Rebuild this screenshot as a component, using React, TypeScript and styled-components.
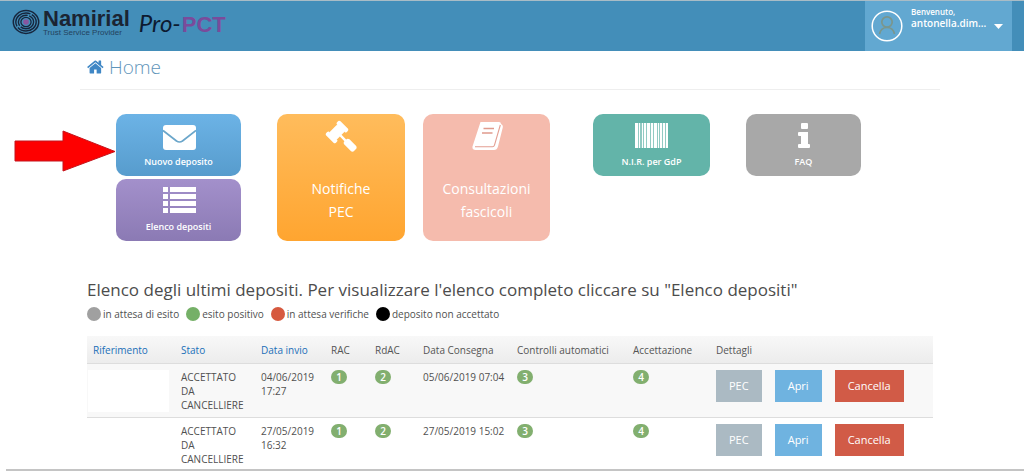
import React from "react";
import styled, { createGlobalStyle } from "styled-components";

const GlobalStyle = createGlobalStyle`
  *, *::before, *::after { box-sizing: border-box; }
  body {
    margin: 0;
    background: #fff;
    color: #505050;
    font-family: "Open Sans", "Noto Sans", sans-serif;
    font-size: 10px;
    line-height: 14px;
  }
`;

const Header = styled.header`
  display: flex;
  justify-content: space-between;
  height: 51px;
  padding: 0 12px;
  background: #438eb9;
  border-top: 1px solid #a9bcc6;
`;

const Brand = styled.a`
  display: flex;
  align-items: flex-start;
  padding-top: 8px;
  color: #1c1f3a;
  text-decoration: none;
  font-family: "Liberation Sans", Arial, sans-serif;
`;

const LogoMark = styled.svg`
  width: 28px;
  height: 26px;
  margin-right: 3px;
`;

const BrandText = styled.span`
  display: flex;
  flex-direction: column;
`;

const BrandName = styled.span`
  font-size: 22px;
  line-height: 20px;
  font-weight: 700;
  color: #1b2433;
`;

const BrandTagline = styled.span`
  font-size: 8px;
  line-height: 8px;
  color: #24435e;
`;

const Product = styled.span`
  display: flex;
  align-items: baseline;
  gap: 1px;
  margin-left: 9px;
  line-height: 28px;
`;

const ProductPrefix = styled.span`
  font-family: Lato, sans-serif;
  font-style: italic;
  font-size: 24px;
  color: #0d1a30;
`;

const ProductName = styled.span`
  font-size: 22px;
  font-weight: 700;
  color: #7a4b9b;
`;

const UserMenu = styled.button`
  display: flex;
  align-items: flex-start;
  width: 147px;
  padding: 5px 9px 0 6px;
  border: 0;
  background: #62a8d1;
  color: #fff;
  font-family: inherit;
  text-align: left;
`;

const Avatar = styled.svg`
  width: 32px;
  height: 32px;
  margin-top: 4px;
`;

const UserText = styled.span`
  display: flex;
  flex: 1;
  flex-direction: column;
  margin-left: 8px;
  font-size: 10px;
  line-height: 11px;
  font-weight: 600;
`;

const Greeting = styled.span`
  font-size: 8px;
  line-height: 12px;
`;

const Caret = styled.svg`
  width: 9px;
  height: 5px;
  margin-top: 18px;
`;

const Main = styled.main`
  padding: 0 84px 0 80px;
`;

const PageHeader = styled.div`
  display: flex;
  align-items: center;
  height: 39px;
  padding: 0 7px 6px;
  border-bottom: 1px solid #eee;
`;

const PageTitle = styled.h1`
  display: flex;
  align-items: center;
  gap: 4px;
  margin: 0;
  color: #5f95ba;
  font-size: 19px;
  line-height: 26px;
  font-weight: 300;
`;

const Glyph = styled.svg<{ $size: number; $color?: string }>`
  display: block;
  flex: none;
  width: ${(p) => p.$size}px;
  height: ${(p) => p.$size}px;
  fill: ${(p) => p.$color ?? "currentColor"};
`;

const Tiles = styled.nav`
  display: flex;
  align-items: flex-start;
  gap: 36px;
  padding: 24px 0 0 36px;
`;

const TileStack = styled.div`
  position: relative;
  display: flex;
  flex-direction: column;
  gap: 3px;
`;

const TilePair = styled.div`
  display: flex;
  gap: 18px;
  margin-right: 7px;
`;

const Pointer = styled.svg`
  position: absolute;
  top: 16px;
  right: 100%;
  width: 102px;
  height: 42px;
`;

const Tile = styled.button<{ $width: number; $from: string; $to: string; $large?: boolean }>`
  display: flex;
  flex-direction: column;
  align-items: center;
  width: ${(p) => p.$width}px;
  height: ${(p) => (p.$large ? 127 : 62)}px;
  padding: ${(p) => (p.$large ? 6 : 7)}px 0 0;
  border: 0;
  border-radius: 10px;
  background: linear-gradient(${(p) => p.$from}, ${(p) => p.$to});
  color: #fff;
  font-family: inherit;
  font-size: ${(p) => (p.$large ? 14 : 9)}px;
  line-height: ${(p) => (p.$large ? 23 : 14)}px;
  font-weight: ${(p) => (p.$large ? 400 : 600)};
  gap: ${(p) => (p.$large ? 25 : 0)}px;
`;

const SectionTitle = styled.h2`
  margin: 0;
  font-size: 17px;
  line-height: 24px;
  font-weight: 400;
  color: #4c4c4c;
`;

const Deposits = styled.section`
  padding: 37px 7px 0;
`;

const Legend = styled.ul`
  display: flex;
  gap: 7px;
  margin: 5px 0 15px;
  padding: 0;
  list-style: none;
`;

const LegendItem = styled.li`
  display: flex;
  align-items: center;
  gap: 2px;
`;

const Dot = styled.span<{ $color: string }>`
  width: 14px;
  height: 14px;
  border-radius: 7px;
  background: ${(p) => p.$color};
`;

const Table = styled.table`
  width: 100%;
  table-layout: fixed;
  border-collapse: separate;
  border-spacing: 0;
`;

const Col = styled.col<{ $width?: number }>`
  width: ${(p) => (p.$width ? `${p.$width}px` : "auto")};
`;

const HeadCell = styled.th`
  height: 28px;
  padding: 0 6px;
  border-bottom: 1px solid #ddd;
  background: linear-gradient(#f8f8f8, #ececec);
  text-align: left;
  font-weight: 400;
  color: #555;
  white-space: nowrap;
`;

const SortLink = styled.a`
  color: #1a6fb8;
  text-decoration: none;
`;

const Cell = styled.td`
  padding: 6px 6px 5px;
  vertical-align: top;
`;

const ReferenceCell = styled(Cell)`
  padding-left: 1px;
`;

const Row = styled.tr<{ $shaded: boolean }>`
  background: ${(p) => (p.$shaded ? "#f8f8f8" : "#fff")};

  &:not(:last-child) > td { border-bottom: 1px solid #ddd; }
  &:last-child > td { padding-bottom: 3px; }
`;

const HiddenReference = styled.div`
  height: 42px;
  background: #fff;
`;

const Badge = styled.span`
  display: block;
  width: 16px;
  height: 14px;
  border-radius: 7px;
  background: #82af6f;
  color: #fff;
  text-align: center;
  font-weight: 600;
`;

const Actions = styled.div`
  display: flex;
  gap: 13px;
`;

const ActionButton = styled.button<{ $color: string }>`
  height: 32px;
  padding: 0 13px;
  border: 0;
  background: ${(p) => p.$color};
  color: #fff;
  font-family: inherit;
  font-size: 11px;
  line-height: 16px;
`;

const BottomRule = styled.footer`
  height: 2px;
  margin-left: 6px;
  background: #c4c4c4;
`;

const HOME =
  "M1408 992v480q0 26-19 45t-45 19h-384v-384h-256v384h-384q-26 0-45-19t-19-45v-480q0-1 .5-3t.5-3l575-474 575 474q1 2 1 6zm223-69l-62 74q-8 9-21 11h-3q-13 0-21-7l-692-577-692 577q-12 8-24 7-13-2-21-11l-62-74q-8-10-7-23.5t11-21.5l719-599q32-26 76-26t76 26l244 204v-195q0-14 9-23t23-9h192q14 0 23 9t9 23v408l219 182q10 8 11 21.5t-7 23.5z";
const GAVEL =
  "M1771 1536q0 53-37 90l-107 108q-39 37-91 37-53 0-90-37l-363-364q-38-36-38-90 0-53 43-96l-256-256-126 126q-14 14-34 14t-34-14q2 2 12.5 12t12.5 13 10 11.5 10 13.5 6 13.5 5.5 16.5 1.5 18q0 38-28 68-3 3-16.5 18t-19 20.5-18.5 16.5-22 15.5-22 9-26 4.5q-40 0-68-28l-408-408q-28-28-28-68 0-13 4.5-26t9-22 15.5-22 16.5-18.5 20.5-19 18-16.5q30-28 68-28 10 0 18 1.5t16.5 5.5 13.5 6 13.5 10 11.5 10 13 12.5 12 12.5q-14-14-14-34t14-34l348-348q14-14 34-14t34 14q-2-2-12.5-12t-12.5-13-10-11.5-10-13.5-6-13.5-5.5-16.5-1.5-18q0-38 28-68 3-3 16.5-18t19-20.5 18.5-16.5 22-15.5 22-9 26-4.5q40 0 68 28l408 408q28 28 28 68 0 13-4.5 26t-9 22-15.5 22-16.5 18.5-20.5 19-18 16.5q-30 28-68 28-10 0-18-1.5t-16.5-5.5-13.5-6-13.5-10-11.5-10-13-12.5-12-12.5q14 14 14 34t-14 34l-126 126 256 256q43-43 96-43 52 0 91 37l363 363q37 39 37 91z";

function HomeIcon() {
  return (
    <Glyph $size={18} $color="#3f87c5" viewBox="0 0 1792 1792" aria-hidden="true">
      <path d={HOME} />
    </Glyph>
  );
}

function GavelIcon() {
  return (
    <Glyph $size={32} viewBox="0 0 1792 1792" aria-hidden="true">
      <path d={GAVEL} />
    </Glyph>
  );
}

function BookIcon() {
  return (
    <Glyph $size={32} viewBox="0 0 32 32" aria-hidden="true">
      <path d="M9.500 2H28q2 0 2 2l1 .8q1.200 1 .7 3L27 26.500Q26 30 23 30H4.500Q1 30 1.500 26.500z" />
      <path d="M4 26.800h17.500q1.500 0 2-1.700L29.300 5" fill="none" stroke="#e39f92" strokeWidth="1.100" />
      <path d="M12.500 8.500H23M11 13h10.500" fill="none" stroke="#df9a8d" strokeWidth="1.300" />
    </Glyph>
  );
}

function EnvelopeIcon() {
  return (
    <Glyph $size={34} viewBox="0 0 34 34" aria-hidden="true">
      <rect x="1" y="4" width="33" height="25" rx="3" />
      <path d="M1 9.500l13.500 10.500q3 2 6 0L34 9.500" fill="none" stroke="#6ba6ca" strokeWidth="1.700" />
    </Glyph>
  );
}

function ListIcon() {
  return (
    <Glyph $size={34} viewBox="0 0 34 34" aria-hidden="true">
      {[1, 8, 15, 22].map((y) => (
        <g key={y}>
          <rect x="1" y={y} width="5" height="5" />
          <rect x="8" y={y} width="26" height="5" />
        </g>
      ))}
    </Glyph>
  );
}

const BARS = [
  [0, 3], [4, 1], [7, 1], [9, 2], [12, 3], [16, 2], [19, 3], [23, 1], [25, 2], [28, 2], [31, 2],
];

function BarcodeIcon() {
  return (
    <Glyph $size={34} viewBox="0 0 34 34" aria-hidden="true">
      <rect x="0" y="2" width="33" height="25" opacity="0.3" />
      {BARS.map(([x, width]) => (
        <rect key={x} x={x} y="2" width={width} height="25" />
      ))}
    </Glyph>
  );
}

function InfoIcon() {
  return (
    <Glyph $size={34} viewBox="0 0 34 34" aria-hidden="true">
      <rect x="14" y="2" width="7" height="6" rx="1" />
      <path d="M12 11h9v12h1q1 0 1 1v2q0 1-1 1H12q-1 0-1-1v-2q0-1 1-1h2v-8h-2q-1 0-1-1v-2q0-1 1-1z" />
    </Glyph>
  );
}

const legend = [
  { label: "in attesa di esito", color: "#a0a0a0" },
  { label: "esito positivo", color: "#75b067" },
  { label: "in attesa verifiche", color: "#d6593f" },
  { label: "deposito non accettato", color: "#000" },
];

const deposits = [
  { sent: "04/06/2019 17:27", delivered: "05/06/2019 07:04" },
  { sent: "27/05/2019 16:32", delivered: "27/05/2019 15:02" },
];

const columns = [88, 80, 70, 44, 48, 94, 116, 83];

export default function App() {
  return (
    <>
      <GlobalStyle />
      <Header>
        <Brand href="#">
          <LogoMark viewBox="0 0 28 26" fill="none" stroke="#17263d" aria-hidden="true">
            <ellipse cx="14" cy="13" rx="12.700" ry="11.400" strokeWidth="1.500" />
            <ellipse cx="14" cy="13" rx="10.200" ry="9" strokeWidth="1.400" strokeDasharray="24 1.500" />
            <ellipse cx="14" cy="13" rx="7.600" ry="6.800" strokeWidth="1.400" strokeDasharray="17 1.500" />
            <ellipse cx="14" cy="13" rx="5.100" ry="4.600" strokeWidth="1.300" />
            <circle cx="14" cy="13" r="2.800" fill="#87569f" stroke="none" />
          </LogoMark>
          <BrandText>
            <BrandName>Namirial</BrandName>
            <BrandTagline>Trust Service Provider</BrandTagline>
          </BrandText>
          <Product>
            <ProductPrefix>Pro-</ProductPrefix>
            <ProductName>PCT</ProductName>
          </Product>
        </Brand>
        <UserMenu type="button">
          <Avatar viewBox="0 0 32 32" fill="none" aria-hidden="true">
            <circle cx="16" cy="16" r="14.800" stroke="#fff" strokeWidth="1.500" />
            <circle cx="16" cy="12" r="5.200" stroke="#7b968c" strokeWidth="1.700" />
            <path d="M8.500 24c1-4.500 4-6.500 7.500-6.500s6.500 2 7.500 6.500" stroke="#7b968c" strokeWidth="1.700" />
          </Avatar>
          <UserText>
            <Greeting>Benvenuto,</Greeting>
            antonella.dim...
          </UserText>
          <Caret viewBox="0 0 9 5" aria-hidden="true">
            <path d="M0 0h9L4.500 5z" fill="#fff" />
          </Caret>
        </UserMenu>
      </Header>
      <Main>
        <PageHeader>
          <PageTitle>
            <HomeIcon />
            Home
          </PageTitle>
        </PageHeader>
        <Tiles>
          <TileStack>
            <Tile type="button" $width={125} $from="#6cb3e6" $to="#579ccd">
              <EnvelopeIcon />
              Nuovo deposito
            </Tile>
            <Tile type="button" $width={125} $from="#a390cb" $to="#8b7ab4">
              <ListIcon />
              Elenco depositi
            </Tile>
            <Pointer viewBox="0 0 102 42" aria-hidden="true">
              <path d="M1 11h48V1l52 20.500L49 41V31H1z" fill="#fe0000" stroke="#c4141c" />
            </Pointer>
          </TileStack>
          <TilePair>
            <Tile type="button" $large $width={128} $from="#ffbc5c" $to="#ffa530">
              <GavelIcon />
              <span>
                Notifiche
                <br />
                PEC
              </span>
            </Tile>
            <Tile type="button" $large $width={127} $from="#f5bbad" $to="#f5bbad">
              <BookIcon />
              <span>
                Consultazioni
                <br />
                fascicoli
              </span>
            </Tile>
          </TilePair>
          <Tile type="button" $width={117} $from="#63b4a9" $to="#63b4a9">
            <BarcodeIcon />
            N.I.R. per GdP
          </Tile>
          <Tile type="button" $width={115} $from="#a8a8a8" $to="#a8a8a8">
            <InfoIcon />
            FAQ
          </Tile>
        </Tiles>
        <Deposits>
          <SectionTitle>
            Elenco degli ultimi depositi. Per visualizzare l'elenco completo cliccare su "Elenco depositi"
          </SectionTitle>
          <Legend>
            {legend.map((item) => (
              <LegendItem key={item.label}>
                <Dot $color={item.color} />
                {item.label}
              </LegendItem>
            ))}
          </Legend>
          <Table>
            <colgroup>
              {columns.map((width, i) => (
                <Col key={i} $width={width} />
              ))}
              <Col />
            </colgroup>
            <thead>
              <tr>
                {["Riferimento", "Stato", "Data invio"].map((label) => (
                  <HeadCell key={label} scope="col">
                    <SortLink href="#">{label}</SortLink>
                  </HeadCell>
                ))}
                {["RAC", "RdAC", "Data Consegna", "Controlli automatici", "Accettazione", "Dettagli"].map((label) => (
                  <HeadCell key={label} scope="col">
                    {label}
                  </HeadCell>
                ))}
              </tr>
            </thead>
            <tbody>
              {deposits.map((deposit, i) => (
                <Row key={deposit.sent} $shaded={i % 2 === 0}>
                  <ReferenceCell>
                    <HiddenReference />
                  </ReferenceCell>
                  <Cell>ACCETTATO DA CANCELLIERE</Cell>
                  <Cell>{deposit.sent}</Cell>
                  <Cell><Badge>1</Badge></Cell>
                  <Cell><Badge>2</Badge></Cell>
                  <Cell>{deposit.delivered}</Cell>
                  <Cell><Badge>3</Badge></Cell>
                  <Cell><Badge>4</Badge></Cell>
                  <Cell>
                    <Actions>
                      <ActionButton type="button" $color="#abbac3">PEC</ActionButton>
                      <ActionButton type="button" $color="#6fb3e0">Apri</ActionButton>
                      <ActionButton type="button" $color="#d15b47">Cancella</ActionButton>
                    </Actions>
                  </Cell>
                </Row>
              ))}
            </tbody>
          </Table>
        </Deposits>
      </Main>
      <BottomRule />
    </>
  );
}
